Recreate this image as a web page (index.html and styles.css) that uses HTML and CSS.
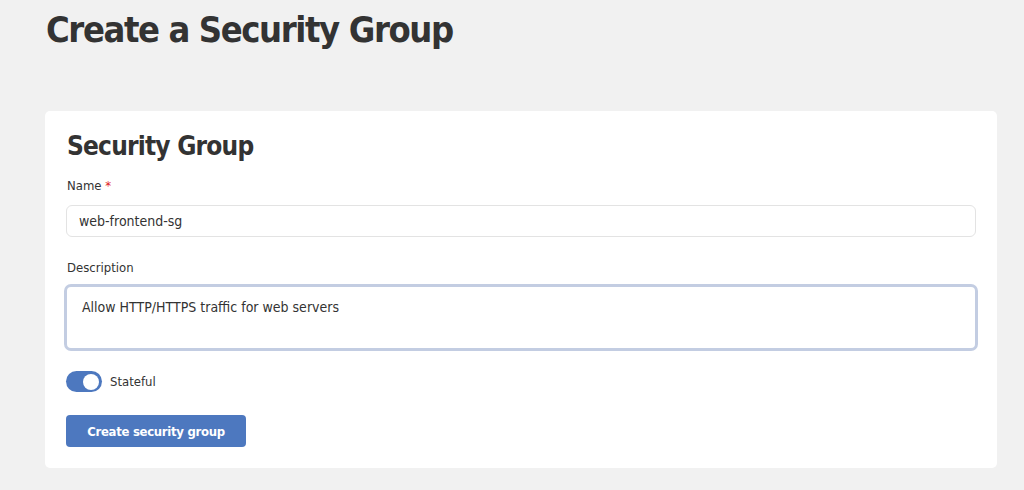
FILE: index.html
```html
<!DOCTYPE html>
<html lang="en">
<head>
<meta charset="utf-8">
<title>Create a Security Group</title>
<link rel="stylesheet" href="styles.css">
</head>
<body>
<main class="page">
  <h1 class="page-title">Create a Security Group</h1>
  <section class="card">
    <h2 class="card-title">Security Group</h2>
    <div class="field">
      <label class="label" for="sg-name">Name <span class="req">*</span></label>
      <input class="input" id="sg-name" type="text" value="web-frontend-sg">
    </div>
    <div class="field">
      <label class="label" for="sg-desc">Description</label>
      <div class="textarea" id="sg-desc">Allow HTTP/HTTPS traffic for web servers</div>
    </div>
    <label class="toggle-row">
      <span class="toggle"><span class="knob"></span></span>
      <span class="toggle-label">Stateful</span>
    </label>
    <button class="btn" type="button">Create security group</button>
  </section>
</main>
</body>
</html>
```
FILE: styles.css
```css
* { box-sizing: border-box; }

html, body {
  margin: 0;
  background: #f1f1f1;
}

body {
  font-family: "DejaVu Sans Condensed", "DejaVu Sans", sans-serif;
  color: #333333;
}

.page {
  padding: 6px 27px 0 45px;
}

.page-title {
  margin: 0;
  font-size: 36px;
  font-weight: 700;
  letter-spacing: -1.4px;
  line-height: 48px;
  color: #333333;
  height: 105px;
  padding-left: 1px;
}

.card {
  background: #ffffff;
  border-radius: 5px;
  padding: 18px 21px 21px 21px;
  display: flex;
  flex-direction: column;
  align-items: flex-start;
}

.card-title {
  margin: 0 0 14px 1px;
  font-size: 26px;
  font-weight: 700;
  letter-spacing: -0.8px;
  line-height: 34px;
  color: #333333;
}

.field {
  display: flex;
  flex-direction: column;
  width: 100%;
  margin-bottom: 22px;
}

.field + .field {
  margin-bottom: 20px;
}

.label {
  font-size: 13px;
  line-height: 18px;
  color: #333333;
  margin-bottom: 10px;
  padding-left: 1px;
}

.req {
  color: #e02020;
}

.input {
  width: 100%;
  height: 32px;
  border: 1px solid #e3e3e3;
  border-radius: 6px;
  padding: 0 12px;
  font: inherit;
  font-size: 14px;
  color: #333333;
  background: #ffffff;
  outline: none;
}

.textarea {
  width: calc(100% + 4px);
  margin: -3px 0 0 -2px;
  height: 67px;
  border: 3px solid #c3cde2;
  border-radius: 7px;
  padding: 11px 15px;
  font-size: 14px;
  line-height: 18px;
  color: #333333;
}

.toggle-row {
  display: flex;
  align-items: center;
  gap: 8px;
  margin-bottom: 23px;
}

.toggle {
  width: 36px;
  height: 21px;
  border-radius: 11px;
  background: #4d78bf;
  display: flex;
  align-items: center;
  justify-content: flex-end;
  padding: 0 3px;
}

.knob {
  width: 16px;
  height: 16px;
  border-radius: 50%;
  background: #ffffff;
}

.toggle-label {
  font-size: 13px;
  color: #333333;
}

.btn {
  width: 180px;
  height: 32px;
  border: 0;
  border-radius: 4px;
  background: #4d78bf;
  color: #ffffff;
  font: inherit;
  font-size: 13px;
  font-weight: 700;
  letter-spacing: -0.3px;
  cursor: pointer;
}
```
